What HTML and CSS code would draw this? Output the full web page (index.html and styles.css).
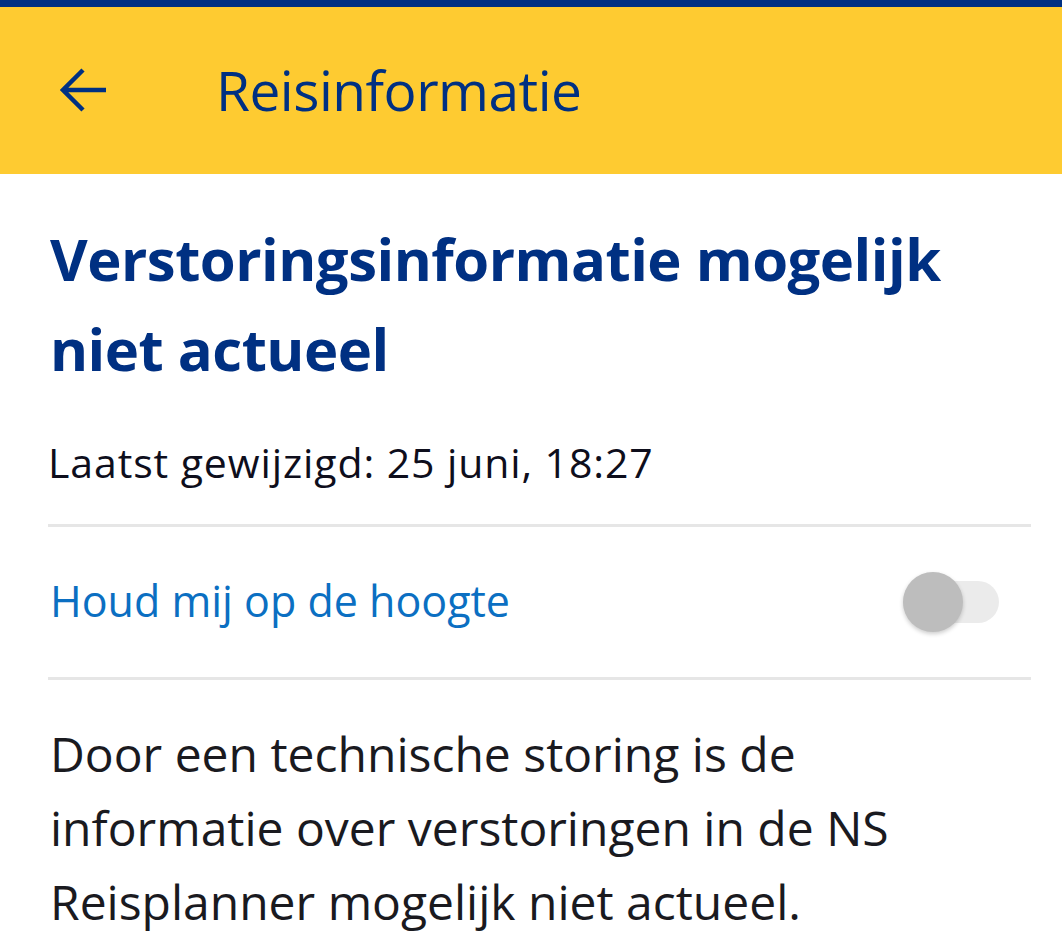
FILE: index.html
```html
<!DOCTYPE html>
<html lang="nl">
<head>
  <meta charset="UTF-8" />
  <meta name="viewport" content="width=device-width, initial-scale=1.0"/>
  <title>Reisinformatie</title>
  <link rel="stylesheet" href="styles.css">
</head>
<body>

  <header class="topbar">
    <button class="back" aria-label="Terug">
      <svg width="48" height="48" viewBox="0 0 48 48">
        <path d="M46 24H4M23 4L3 24l20 20" fill="none" stroke="#003082" stroke-width="4.5" stroke-linejoin="miter"/>
      </svg>
    </button>
    <h1>Reisinformatie</h1>
  </header>

  <main class="content">
    <h2>Verstoringsinformatie mogelijk niet actueel</h2>
    <p class="updated">Laatst gewijzigd: 25 juni, 18:27</p>

    <div class="notify">
      <span>Houd mij op de hoogte</span>
      <label class="switch">
        <input type="checkbox">
        <span class="track"></span>
        <span class="knob"></span>
      </label>
    </div>

    <p class="body-text">Door een technische storing is de informatie over verstoringen in de NS Reisplanner mogelijk niet actueel.</p>
  </main>

</body>
</html>
```

FILE: styles.css
```css
* {
  box-sizing: border-box;
}

body {
  margin: 0;
  background: white;
  font-family: 'Open Sans', 'Noto Sans', sans-serif;
  color: #1a1a1f;
}

.topbar {
  display: flex;
  align-items: center;
  height: 174px;
  background: #fecb31;
  border-top: 7px solid #003082;
  padding-left: 60px;
}

.back {
  width: 48px;
  height: 48px;
  padding: 0;
  border: none;
  background: none;
  display: flex;
  margin-top: -2px;
}

.topbar h1 {
  margin: -3px 0 0 108px;
  font-size: 55px;
  font-weight: 400;
  color: #003082;
  letter-spacing: -0.5px;
}

.content {
  padding: 0 31px 0 48px;
}

.content h2 {
  margin: 40px 0 0 2px;
  font-size: 58px;
  line-height: 90px;
  font-weight: 700;
  color: #003082;
  letter-spacing: -0.5px;
}

.updated {
  margin: 38px 0 0;
  font-size: 41px;
  line-height: 60px;
  letter-spacing: 0.9px;
  padding-bottom: 32px;
  border-bottom: 3px solid #e6e6e6;
  color: #0e0e1c;
}

.notify {
  display: flex;
  align-items: center;
  justify-content: space-between;
  height: 153px;
  border-bottom: 3px solid #e6e6e6;
  color: #0b6fc2;
  font-size: 43px;
  padding-left: 2px;
}

.notify > span {
  margin-top: -4px;
}

.switch {
  position: relative;
  width: 96px;
  height: 60px;
  margin-right: 32px;
}

.switch input {
  display: none;
}

.track {
  position: absolute;
  left: 0;
  right: 0;
  top: 9px;
  height: 42px;
  border-radius: 21px;
  background: #ebebeb;
}

.knob {
  position: absolute;
  left: 0;
  top: 0;
  width: 60px;
  height: 60px;
  border-radius: 50%;
  background: #bdbdbd;
  box-shadow: 0 2px 4px rgba(0,0,0,0.2);
}

.body-text {
  margin: 37px 0 0 2px;
  max-width: 930px;
  font-size: 48px;
  line-height: 74px;
  letter-spacing: 0;
}
```
